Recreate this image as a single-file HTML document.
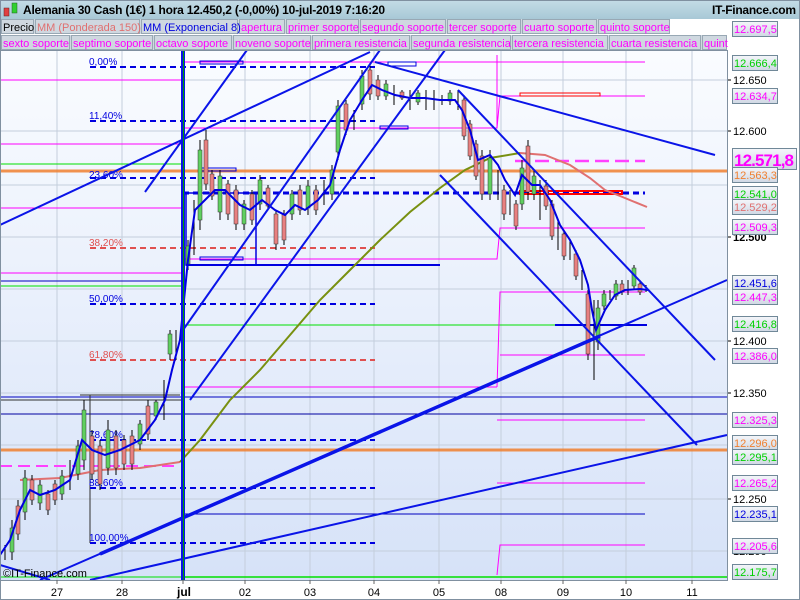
<!DOCTYPE html>
<html><head><meta charset="utf-8"><style>
body{margin:0;width:800px;height:600px;overflow:hidden;font-family:"Liberation Sans",sans-serif;background:#fff}
svg{display:block}
</style></head><body>
<svg width="800" height="600" xmlns="http://www.w3.org/2000/svg" font-family="Liberation Sans, sans-serif">
<defs>
<linearGradient id="bg" x1="0" y1="0" x2="0" y2="1"><stop offset="0" stop-color="#fafcff"/><stop offset="1" stop-color="#d6e2f8"/></linearGradient>
<linearGradient id="hd" x1="0" y1="0" x2="0" y2="1"><stop offset="0" stop-color="#c4dce6"/><stop offset="1" stop-color="#a8c8d6"/></linearGradient>
<linearGradient id="lb" x1="0" y1="0" x2="0" y2="1"><stop offset="0" stop-color="#f4f6fa"/><stop offset="1" stop-color="#d0d8e4"/></linearGradient>
</defs>
<rect width="800" height="600" fill="#fff"/>
<rect x="0" y="50" width="727" height="530" fill="url(#bg)"/>
<g stroke="#c4cedc" stroke-width="1">
<line x1="57" y1="50" x2="57" y2="580"/><line x1="122" y1="50" x2="122" y2="580"/><line x1="245" y1="50" x2="245" y2="580"/><line x1="310" y1="50" x2="310" y2="580"/><line x1="374" y1="50" x2="374" y2="580"/><line x1="439" y1="50" x2="439" y2="580"/><line x1="501" y1="50" x2="501" y2="580"/><line x1="563" y1="50" x2="563" y2="580"/><line x1="626" y1="50" x2="626" y2="580"/><line x1="692" y1="50" x2="692" y2="580"/>
<line x1="0" y1="80" x2="727" y2="80"/><line x1="0" y1="131" x2="727" y2="131"/><line x1="0" y1="185" x2="727" y2="185"/><line x1="0" y1="237" x2="727" y2="237"/><line x1="0" y1="289" x2="727" y2="289"/><line x1="0" y1="341" x2="727" y2="341"/><line x1="0" y1="393" x2="727" y2="393"/><line x1="0" y1="445" x2="727" y2="445"/><line x1="0" y1="499" x2="727" y2="499"/><line x1="0" y1="551" x2="727" y2="551"/>
</g>
<g stroke-width="1">
<line x1="0" y1="80" x2="182" y2="80" stroke="#ff00ff"/>
<line x1="0" y1="144" x2="182" y2="144" stroke="#ff00ff"/>
<line x1="0" y1="164" x2="182" y2="164" stroke="#00e000"/>
<line x1="0" y1="208" x2="182" y2="208" stroke="#ff00ff"/>
<line x1="0" y1="273" x2="182" y2="273" stroke="#ff00ff"/>
<line x1="0" y1="281" x2="182" y2="281" stroke="#0000c0"/>
<line x1="0" y1="286" x2="182" y2="286" stroke="#00e000"/>
<line x1="0" y1="397" x2="727" y2="397" stroke="#0000c0"/>
<line x1="0" y1="400" x2="182" y2="400" stroke="#303030"/>
<line x1="0" y1="414" x2="727" y2="414" stroke="#0000a0"/>
<line x1="80" y1="395" x2="180" y2="395" stroke="#303030"/>
<line x1="90" y1="395" x2="90" y2="543" stroke="#303030"/>
<line x1="183" y1="40" x2="645" y2="40" stroke="#00e000"/>
<line x1="183" y1="325" x2="645" y2="325" stroke="#00e000"/>
<line x1="183" y1="577" x2="727" y2="577" stroke="#00e000" stroke-width="1.5"/>
<line x1="0" y1="577" x2="182" y2="577" stroke="#00e000"/>
<line x1="183" y1="514" x2="645" y2="514" stroke="#0000c0"/>
</g>
<g stroke="#ff00ff" stroke-width="1" fill="none">
<polyline points="183,128 497,128 500,96 645,96"/>
<polyline points="183,62 645,62"/>
<line x1="497" y1="55" x2="497" y2="128"/>
<polyline points="183,259 497,259 500,228 645,228"/>
<polyline points="497,387 500,292 645,292"/>
<polyline points="500,355 645,355"/>
<polyline points="497,420 645,420"/>
<polyline points="497,483 645,483"/>
<polyline points="497,575 500,545 645,545"/>
<polyline points="183,387 497,387"/>
</g>
<line x1="0" y1="171" x2="727" y2="171" stroke="#f08030" stroke-width="3" opacity="0.85"/>
<line x1="0" y1="450" x2="727" y2="450" stroke="#f08030" stroke-width="3" opacity="0.85"/>
<g stroke-dasharray="6,4" stroke-width="2" fill="none">
<line x1="90" y1="67" x2="375" y2="67" stroke="#0000e0"/>
<line x1="90" y1="121" x2="375" y2="121" stroke="#0000e0"/>
<line x1="90" y1="178" x2="375" y2="178" stroke="#0000e0"/>
<line x1="90" y1="248" x2="375" y2="248" stroke="#e05050"/>
<line x1="90" y1="304" x2="375" y2="304" stroke="#0000e0"/>
<line x1="90" y1="360" x2="375" y2="360" stroke="#e05050"/>
<line x1="90" y1="440" x2="375" y2="440" stroke="#0000e0"/>
<line x1="90" y1="488" x2="375" y2="488" stroke="#0000e0"/>
<line x1="90" y1="543" x2="375" y2="543" stroke="#0000e0"/>
<line x1="183" y1="193" x2="645" y2="193" stroke="#0000e0" stroke-width="3"/>
<line x1="515" y1="161" x2="645" y2="161" stroke="#ff40ff" stroke-width="2.5" stroke-dasharray="14,6"/>
<line x1="0" y1="466" x2="180" y2="466" stroke="#ff40ff" stroke-dasharray="12,6"/>
</g>
<g font-size="10" fill="#0000e0">
<text x="89" y="65">0,00%</text><text x="89" y="119">11,40%</text><text x="89" y="178">23,60%</text><text x="89" y="246" fill="#e05050">38,20%</text><text x="89" y="302">50,00%</text><text x="89" y="358" fill="#e05050">61,80%</text><text x="89" y="438">78,60%</text><text x="89" y="486">88,60%</text><text x="89" y="541">100,00%</text>
</g>
<g fill="none" stroke-width="1">
<rect x="200" y="61" width="43" height="3" stroke="#0000e0"/>
<rect x="388" y="62" width="28" height="4" stroke="#0000e0"/>
<rect x="380" y="126" width="28" height="3" stroke="#0000e0"/>
<rect x="200" y="168" width="36" height="3" stroke="#0000e0"/>
<rect x="200" y="257" width="43" height="3" stroke="#0000e0"/>
<rect x="520" y="93" width="80" height="3" stroke="#ff0000"/>
<rect x="520" y="191" width="102" height="3" stroke="#ff0000" stroke-width="2"/>
<rect x="186" y="193" width="70" height="72" stroke="#0000e0" stroke-width="1.5"/>
<line x1="186" y1="265" x2="440" y2="265" stroke="#0000e0" stroke-width="2"/>
<line x1="555" y1="325" x2="647" y2="325" stroke="#0000e0" stroke-width="2"/>
</g>
<polyline fill="none" stroke="#e07070" stroke-width="2" points="20,480 60,478 100,470 140,468 180,462"/>
<polyline fill="none" stroke="#789010" stroke-width="2" points="180,462 200,440 230,400 260,370 290,335 320,300 350,270 380,240 410,212 440,188 465,170 490,158 520,153"/>
<polyline fill="none" stroke="#e07070" stroke-width="2" points="520,153 545,155 570,165 590,178 605,190 620,196 647,207"/>
<g stroke="#000" stroke-width="1">
<path d="M5,545V560M12,520V560M18,500V540M25,470V520M32,475V505M40,480V510M48,490V515M55,480V505M62,470V500M70,460V490M78,440V480M84,400V470M92,430V480M100,440V490M108,420V475M116,430V475M124,435V470M132,430V470M140,420V450M148,400V440M156,400V420M164,380V420M170,330V360M176,330V360M182,300V350M188,240V270M194,200V255M200,140V230M206,130V190M212,170V200M220,170V220M228,180V220M236,185V230M244,200V230M252,190V225M260,175V210M268,185V210M276,210V250M284,210V245M292,190V220M300,185V215M308,180V215M316,185V215M324,180V205M332,165V200M338,100V160M346,100V135M354,110V130M362,70V110M370,65V100M378,75V100M386,80V100M394,85V105M402,90V100M410,90V110M418,90V105M426,90V110M434,90V110M442,95V105M450,90V105M458,90V110M464,95V140M470,120V160M476,140V180M482,150V200M490,150V200M498,170V200M504,185V220M510,190V215M516,200V230M522,160V210M528,140V200M534,170V200M540,180V220M546,180V210M552,200V240M558,220V250M564,230V260M570,240V260M576,250V280M582,270V290M588,290V360M594,300V380M598,300V350M604,290V310M610,290V300M616,280V300M622,280V295M628,280V295M634,265V290M640,280V295M646,285V292"/>
</g>
<g stroke="#333" stroke-width="0.5">
<g fill="#60d060">
<rect x="10" y="528" width="4" height="24"/><rect x="23" y="478" width="4" height="34"/><rect x="38" y="485" width="4" height="18"/><rect x="60" y="476" width="4" height="18"/><rect x="76" y="446" width="4" height="28"/><rect x="82" y="410" width="4" height="50"/><rect x="106" y="430" width="4" height="38"/><rect x="138" y="424" width="4" height="20"/><rect x="154" y="402" width="4" height="14"/><rect x="168" y="334" width="4" height="20"/><rect x="186" y="246" width="4" height="18"/><rect x="198" y="150" width="4" height="70"/><rect x="218" y="176" width="4" height="36"/><rect x="242" y="204" width="4" height="20"/><rect x="258" y="180" width="4" height="24"/><rect x="290" y="194" width="4" height="20"/><rect x="306" y="186" width="4" height="22"/><rect x="330" y="170" width="4" height="24"/><rect x="336" y="106" width="4" height="46"/><rect x="360" y="76" width="4" height="28"/><rect x="384" y="84" width="4" height="12"/><rect x="416" y="93" width="4" height="9"/><rect x="448" y="93" width="4" height="8"/><rect x="488" y="158" width="4" height="36"/><rect x="520" y="168" width="4" height="36"/><rect x="532" y="176" width="4" height="18"/><rect x="596" y="308" width="4" height="34"/><rect x="602" y="294" width="4" height="12"/><rect x="614" y="284" width="4" height="12"/><rect x="632" y="268" width="4" height="18"/></g>
<g fill="#e88080">
<rect x="16" y="506" width="4" height="28"/><rect x="30" y="480" width="4" height="20"/><rect x="46" y="494" width="4" height="16"/><rect x="53" y="484" width="4" height="16"/><rect x="90" y="436" width="4" height="38"/><rect x="98" y="446" width="4" height="38"/><rect x="114" y="436" width="4" height="32"/><rect x="122" y="440" width="4" height="24"/><rect x="130" y="436" width="4" height="28"/><rect x="146" y="406" width="4" height="28"/><rect x="204" y="140" width="4" height="44"/><rect x="210" y="174" width="4" height="22"/><rect x="226" y="184" width="4" height="30"/><rect x="234" y="190" width="4" height="34"/><rect x="250" y="194" width="4" height="26"/><rect x="266" y="188" width="4" height="18"/><rect x="274" y="214" width="4" height="30"/><rect x="282" y="214" width="4" height="26"/><rect x="298" y="190" width="4" height="20"/><rect x="314" y="190" width="4" height="20"/><rect x="344" y="104" width="4" height="26"/><rect x="368" y="70" width="4" height="24"/><rect x="376" y="80" width="4" height="16"/><rect x="400" y="92" width="4" height="6"/><rect x="462" y="100" width="4" height="36"/><rect x="468" y="124" width="4" height="32"/><rect x="474" y="144" width="4" height="32"/><rect x="480" y="156" width="4" height="38"/><rect x="502" y="190" width="4" height="24"/><rect x="514" y="204" width="4" height="22"/><rect x="526" y="146" width="4" height="46"/><rect x="544" y="186" width="4" height="20"/><rect x="550" y="204" width="4" height="32"/><rect x="562" y="234" width="4" height="22"/><rect x="574" y="254" width="4" height="22"/><rect x="586" y="294" width="4" height="60"/><rect x="620" y="284" width="4" height="8"/><rect x="638" y="284" width="4" height="8"/></g>
</g>
<polyline fill="none" stroke="#0000e0" stroke-width="2" points="0,555 10,540 20,510 30,490 40,495 55,490 70,480 82,440 92,450 105,455 120,450 140,440 155,420 165,400 172,370 180,340 188,260 195,210 205,200 215,190 225,190 240,205 250,210 262,200 275,210 285,215 295,205 305,210 318,200 330,185 340,150 350,120 362,100 372,85 382,90 395,95 410,98 425,98 440,100 455,100 462,110 470,130 478,160 490,155 498,165 505,180 515,195 522,175 532,185 540,185 550,200 560,225 570,240 580,260 588,285 592,310 596,330 605,310 615,295 625,290 640,289 648,290"/>
<g stroke="#0a14e8" fill="none" stroke-width="2">
<line x1="0" y1="225" x2="370" y2="52"/>
<line x1="145" y1="192" x2="247" y2="50"/>
<line x1="183" y1="330" x2="380" y2="50"/>
<line x1="190" y1="400" x2="445" y2="50"/>
<line x1="375" y1="62" x2="715" y2="155"/>
<line x1="458" y1="90" x2="715" y2="360"/>
<line x1="440" y1="175" x2="697" y2="445"/>
<line x1="90" y1="580" x2="727" y2="435"/>
<line x1="0" y1="565" x2="50" y2="580"/>
<line x1="40" y1="580" x2="727" y2="280" stroke-width="2"/>
<line x1="100" y1="554" x2="600" y2="336" stroke-width="3.5"/>
</g>
<rect x="181" y="50" width="4" height="530" fill="#0a14e8"/>
<rect x="183" y="50" width="1" height="530" fill="#00a000"/>
<text x="3" y="577" font-size="11" fill="#000">©IT-Finance.com</text>
<rect x="0.5" y="50.5" width="727" height="530" fill="none" stroke="#8090a0"/>
<rect x="0" y="0" width="800" height="19" fill="url(#hd)"/>
<rect x="4" y="8" width="5" height="8" fill="#e04040" stroke="#602020" stroke-width="0.5"/>
<rect x="12" y="3" width="5" height="10" fill="#30d030" stroke="#206020" stroke-width="0.5"/>
<text x="23" y="14" font-size="12" font-weight="bold" fill="#000" textLength="362">Alemania 30 Cash (1€)   1 hora   12.450,2 (-0,00%)   10-jul-2019 7:16:20</text>
<text x="712" y="14" font-size="12" font-weight="bold" fill="#000" textLength="84">IT-Finance.com</text>
<g font-size="11">
<rect x="0" y="19" width="669" height="15" fill="#cfd8e0"/>
<rect x="0" y="35" width="727" height="15" fill="#cfd8e0"/>
<g fill="none" stroke="#98a8b4"><rect x="1.5" y="19.5" width="32" height="14"/><rect x="35.5" y="19.5" width="104" height="14"/><rect x="141.5" y="19.5" width="96" height="14"/><rect x="239.5" y="19.5" width="45" height="14"/><rect x="286.5" y="19.5" width="72" height="14"/><rect x="360.5" y="19.5" width="85" height="14"/><rect x="447.5" y="19.5" width="73" height="14"/><rect x="522.5" y="19.5" width="74" height="14"/><rect x="598.5" y="19.5" width="71" height="14"/>
<rect x="1.5" y="35.5" width="68" height="14"/><rect x="71.5" y="35.5" width="81" height="14"/><rect x="154.5" y="35.5" width="77" height="14"/><rect x="233.5" y="35.5" width="77" height="14"/><rect x="312.5" y="35.5" width="97" height="14"/><rect x="411.5" y="35.5" width="99" height="14"/><rect x="512.5" y="35.5" width="95" height="14"/><rect x="609.5" y="35.5" width="91" height="14"/><rect x="702.5" y="35.5" width="24" height="14"/></g>
<text x="3" y="31" fill="#000">Precio</text><text x="37" y="31" fill="#e07070">MM (Ponderada 150)</text><text x="143" y="31" fill="#0000e0">MM (Exponencial 8)</text>
<g fill="#ff00ff"><text x="241" y="31">apertura</text><text x="288" y="31">primer soporte</text><text x="362" y="31">segundo soporte</text><text x="449" y="31">tercer soporte</text><text x="524" y="31">cuarto soporte</text><text x="600" y="31">quinto soporte</text>
<text x="3" y="47">sexto soporte</text><text x="73" y="47">septimo soporte</text><text x="156" y="47">octavo soporte</text><text x="235" y="47">noveno soporte</text><text x="314" y="47">primera resistencia</text><text x="413" y="47">segunda resistencia</text><text x="514" y="47">tercera resistencia</text><text x="611" y="47">cuarta resistencia</text><text x="704" y="47">quint</text></g>
</g>
<g font-size="11" fill="#000">
<text x="733" y="84">12.650</text><text x="733" y="135">12.600</text><text x="733" y="241" font-weight="bold">12.500</text><text x="733" y="345">12.400</text><text x="733" y="397">12.350</text><text x="733" y="503">12.250</text><text x="733" y="555">12.200</text>
</g>
<g stroke="#000"><line x1="728" y1="80" x2="731" y2="80"/><line x1="728" y1="131" x2="731" y2="131"/><line x1="728" y1="237" x2="731" y2="237"/><line x1="728" y1="341" x2="731" y2="341"/><line x1="728" y1="393" x2="731" y2="393"/><line x1="728" y1="499" x2="731" y2="499"/></g>
<g font-size="11">
<g stroke="#708898" fill="url(#lb)">
<rect x="732.5" y="21.5" width="45" height="15"/><rect x="732.5" y="55.5" width="45" height="15"/><rect x="732.5" y="88.5" width="45" height="15"/><rect x="732.5" y="148.5" width="64" height="21"/><rect x="732.5" y="167.5" width="45" height="15"/><rect x="732.5" y="186.5" width="45" height="15"/><rect x="732.5" y="199.5" width="45" height="15"/><rect x="732.5" y="219.5" width="45" height="15"/><rect x="732.5" y="275.5" width="45" height="15"/><rect x="732.5" y="289.5" width="45" height="15"/><rect x="732.5" y="316.5" width="45" height="15"/><rect x="732.5" y="348.5" width="45" height="15"/><rect x="732.5" y="412.5" width="45" height="15"/><rect x="732.5" y="435.5" width="45" height="15"/><rect x="732.5" y="449.5" width="45" height="15"/><rect x="732.5" y="475.5" width="45" height="15"/><rect x="732.5" y="506.5" width="45" height="15"/><rect x="732.5" y="538.5" width="45" height="15"/><rect x="732.5" y="564.5" width="45" height="15"/>
</g>
<text x="734" y="33" fill="#ff00ff">12.697,5</text>
<text x="734" y="67" fill="#00d000">12.666,4</text>
<text x="734" y="100" fill="#ff00ff">12.634,7</text>
<text x="734" y="166" fill="#ff00ff" font-size="17" font-weight="bold" textLength="60">12.571,8</text>
<text x="734" y="179" fill="#f08030">12.563,3</text>
<text x="734" y="198" fill="#00d000">12.541,0</text>
<text x="734" y="211" fill="#e07070">12.529,2</text>
<text x="734" y="231" fill="#ff00ff">12.509,3</text>
<text x="734" y="287" fill="#0000e0">12.451,6</text>
<text x="734" y="301" fill="#ff00ff">12.447,3</text>
<text x="734" y="328" fill="#00d000">12.416,8</text>
<text x="734" y="360" fill="#ff00ff">12.386,0</text>
<text x="734" y="424" fill="#ff00ff">12.325,3</text>
<text x="734" y="447" fill="#f08030">12.296,0</text>
<text x="734" y="461" fill="#00d000">12.295,1</text>
<text x="734" y="487" fill="#ff00ff">12.265,2</text>
<text x="734" y="518" fill="#0000e0">12.235,1</text>
<text x="734" y="550" fill="#ff00ff">12.205,6</text>
<text x="734" y="576" fill="#00d000">12.175,7</text>
</g>
<g stroke="#666"><line x1="57" y1="580" x2="57" y2="584"/><line x1="122" y1="580" x2="122" y2="584"/><line x1="183" y1="580" x2="183" y2="584"/><line x1="245" y1="580" x2="245" y2="584"/><line x1="310" y1="580" x2="310" y2="584"/><line x1="374" y1="580" x2="374" y2="584"/><line x1="439" y1="580" x2="439" y2="584"/><line x1="501" y1="580" x2="501" y2="584"/><line x1="563" y1="580" x2="563" y2="584"/><line x1="626" y1="580" x2="626" y2="584"/><line x1="692" y1="580" x2="692" y2="584"/></g>
<g font-size="11" fill="#000" text-anchor="middle">
<text x="57" y="596">27</text><text x="122" y="596">28</text><text x="184" y="596" font-weight="bold" font-size="12">jul</text><text x="245" y="596">02</text><text x="310" y="596">03</text><text x="374" y="596">04</text><text x="439" y="596">05</text><text x="501" y="596">08</text><text x="563" y="596">09</text><text x="626" y="596">10</text><text x="692" y="596">11</text>
</g>
<rect x="0.5" y="0.5" width="799" height="599" fill="none" stroke="#8090a0"/>
</svg>
</body></html>
